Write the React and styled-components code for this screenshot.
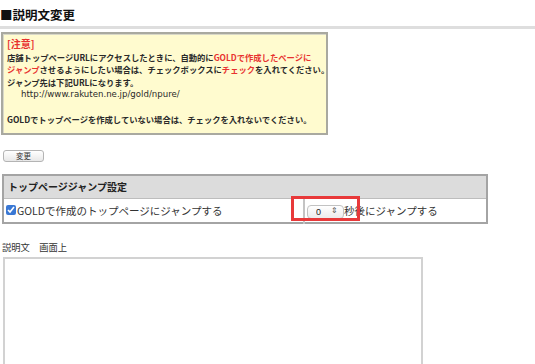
import React from "react";
import styled, { createGlobalStyle } from "styled-components";

const GlobalStyle = createGlobalStyle`
  html, body {
    margin: 0;
    padding: 0;
    background: #fff;
  }
  body {
    font-family: "Liberation Sans", "Noto Sans CJK JP", sans-serif;
    color: #222;
    overflow: hidden;
  }
`;

const Page = styled.div`
  width: 535px;
  height: 364px;
  overflow: hidden;
`;

const Title = styled.h2`
  margin: 0;
  padding: 7px 0 0 0;
  height: 19px;
  font-size: 12.5px;
  line-height: 16px;
  font-weight: bold;
  font-family: "Noto Sans CJK JP", sans-serif;
  color: #111;
`;

const TitleRule = styled.div`
  height: 3px;
  background: #dedede;
  margin-bottom: 3px;
`;

const Notice = styled.div`
  margin-left: 1px;
  width: 315px;
  border: 2px solid #a9a9a0;
  box-shadow: inset 1px 1px 0 #d8d8c8;
  background: #fffbcf;
  padding: 4px 4px 7px 4px;
  font-size: 8.3px;
  line-height: 12.5px;
  font-weight: bold;
  font-family: "Noto Sans CJK JP", sans-serif;
  color: #2a2a2a;
  white-space: nowrap;
`;

const NoticeLine = styled.div`
  min-height: 12.5px;
  padding-left: ${({ $indent }) => ($indent ? "14px" : "0")};
  font-size: ${({ $light }) => ($light ? "8.6px" : "8.3px")};
  font-weight: ${({ $light }) => ($light ? "normal" : "bold")};
  font-family: ${({ $light }) =>
    $light ? '"DejaVu Sans", sans-serif' : '"Noto Sans CJK JP", sans-serif'};
`;

const NoticeHead = styled.div`
  color: #e8322f;
  font-size: 10px;
  line-height: 12.5px;
`;

const Red = styled.span`
  color: #e8322f;
`;

const ChangeButton = styled.button`
  display: block;
  margin: 15px 0 0 3px;
  width: 41px;
  height: 12px;
  padding: 0;
  border: 1px solid #b4b4b4;
  border-radius: 3px;
  background: linear-gradient(#ffffff, #e8e8e8);
  font-size: 7.5px;
  line-height: 10px;
  font-family: "Noto Sans CJK JP", sans-serif;
  color: #333;
`;

const TableArea = styled.div`
  position: relative;
  padding-top: 12px;
`;

const SettingsTable = styled.table`
  margin: 0 0 0 2px;
  width: 486px;
  border-collapse: collapse;
  border: 2px solid #a4a4a4;
  font-family: "Noto Sans CJK JP", sans-serif;
`;

const HeadCell = styled.th`
  height: 22px;
  padding: 0 0 0 4px;
  text-align: left;
  background: #dcdcdc;
  border: 1px solid #bdbdbd;
  font-size: 10px;
  font-weight: bold;
  color: #222;
`;

const Cell = styled.td`
  height: 23px;
  padding: 0 0 0 ${({ $pad }) => $pad || 2}px;
  border: 1px solid #c4c4c4;
  border-left-width: ${({ $divider }) => ($divider ? "2px" : "1px")};
  width: ${({ $w }) => ($w ? `${$w}px` : "auto")};
  font-size: 10.5px;
  color: #333;
  white-space: nowrap;
`;

const CheckLabel = styled.label`
  display: flex;
  align-items: center;
  gap: 1px;
`;

const Check = styled.input`
  width: 10px;
  height: 10px;
  margin: 0;
  accent-color: #3a78d4;
`;

const Inline = styled.div`
  display: flex;
  align-items: center;
  gap: 0;
`;

const SelectWrap = styled.span`
  position: relative;
  display: inline-block;
  width: 37px;
  height: 14px;
`;

const Select = styled.select`
  appearance: none;
  width: 37px;
  height: 14px;
  margin: 0;
  padding: 0 0 0 8px;
  border: 1px solid #c2c2c2;
  border-radius: 4px;
  background: linear-gradient(#ffffff, #ececec);
  font-size: 9px;
  line-height: 12px;
  font-family: "Liberation Sans", sans-serif;
  color: #222;
`;

const SelectArrow = styled.span`
  position: absolute;
  right: 6px;
  top: 1px;
  font-size: 8px;
  line-height: 12px;
  color: #555;
  pointer-events: none;
`;

const Highlight = styled.div`
  position: absolute;
  left: 291px;
  top: 34px;
  width: 63px;
  height: 19px;
  border: 3px solid #e8393a;
  pointer-events: none;
`;

const DescLabel = styled.div`
  margin: 17px 0 0 2px;
  font-size: 9.3px;
  line-height: 12px;
  font-family: "Noto Sans CJK JP", sans-serif;
  color: #333;
`;

const DescText = styled.textarea`
  display: block;
  margin: 4px 0 0 3px;
  width: 416px;
  height: 140px;
  border: 2px solid #d2d2d2;
  padding: 0;
  resize: none;
  background: #fff;
`;

export default function App() {
  return (
    <Page>
      <GlobalStyle />
      <Title>■説明文変更</Title>
      <TitleRule />
      <Notice>
        <NoticeHead>[注意]</NoticeHead>
        <NoticeLine>
          店舗トップページURLにアクセスしたときに、自動的に
          <Red>GOLDで作成したページに</Red>
        </NoticeLine>
        <NoticeLine>
          <Red>ジャンプ</Red>させるようにしたい場合は、チェックボックスに
          <Red>チェック</Red>を入れてください。
        </NoticeLine>
        <NoticeLine>ジャンプ先は下記URLになります。</NoticeLine>
        <NoticeLine $indent $light>
          http://www.rakuten.ne.jp/gold/npure/
        </NoticeLine>
        <NoticeLine />
        <NoticeLine>
          GOLDでトップページを作成していない場合は、チェックを入れないでください。
        </NoticeLine>
      </Notice>
      <ChangeButton>変更</ChangeButton>
      <TableArea>
        <SettingsTable>
          <thead>
            <tr>
              <HeadCell colSpan={2}>トップページジャンプ設定</HeadCell>
            </tr>
          </thead>
          <tbody>
            <tr>
              <Cell $w={297}>
                <CheckLabel>
                  <Check type="checkbox" defaultChecked />
                  GOLDで作成のトップページにジャンプする
                </CheckLabel>
              </Cell>
              <Cell $divider $pad={2}>
                <Inline>
                  <SelectWrap>
                    <Select defaultValue="0">
                      <option value="0">0</option>
                      <option value="3">3</option>
                      <option value="5">5</option>
                    </Select>
                    <SelectArrow>⇕</SelectArrow>
                  </SelectWrap>
                  秒後にジャンプする
                </Inline>
              </Cell>
            </tr>
          </tbody>
        </SettingsTable>
        <Highlight />
      </TableArea>
      <DescLabel>説明文　画面上</DescLabel>
      <DescText />
    </Page>
  );
}
